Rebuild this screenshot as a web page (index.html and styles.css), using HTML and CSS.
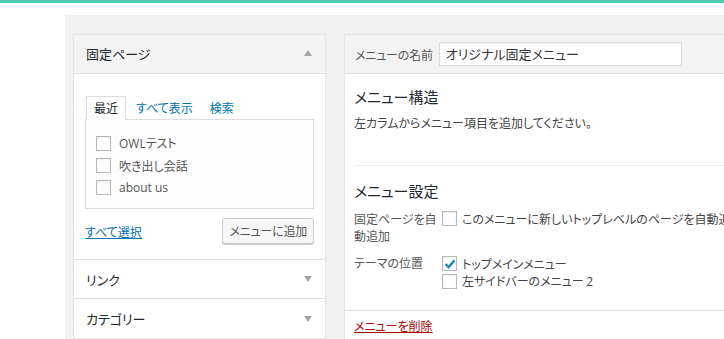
FILE: index.html
```html
<!DOCTYPE html>
<html lang="ja">
<head>
<meta charset="utf-8">
<link rel="stylesheet" href="styles.css">
</head>
<body>
<div class="topbar"></div>
<div class="page">
  <div class="wrap">
    <div class="left">
      <div class="acc">
        <div class="acc-head open">
          <span>固定ページ</span>
          <span class="arrow up"></span>
        </div>
        <div class="acc-body">
          <ul class="tabs">
            <li class="tab active">最近</li>
            <li class="tab"><a>すべて表示</a></li>
            <li class="tab"><a>検索</a></li>
          </ul>
          <div class="tab-panel">
            <label class="row"><span class="cb"></span><span class="lat">OWLテスト</span></label>
            <label class="row"><span class="cb"></span><span>吹き出し会話</span></label>
            <label class="row"><span class="cb"></span><span class="lat">about us</span></label>
          </div>
          <div class="actions">
            <a class="select-all">すべて選択</a>
            <span class="button">メニューに追加</span>
          </div>
        </div>
        <div class="acc-head closed">
          <span>リンク</span>
          <span class="arrow down"></span>
        </div>
        <div class="acc-head closed last">
          <span>カテゴリー</span>
          <span class="arrow down"></span>
        </div>
      </div>
    </div>
    <div class="right">
      <div class="menu-box">
        <div class="menu-head">
          <span class="name-label">メニューの名前</span>
          <span class="name-input">オリジナル固定メニュー</span>
        </div>
        <div class="menu-body">
          <h3 class="h3">メニュー構造</h3>
          <p class="desc">左カラムからメニュー項目を追加してください。</p>
          <div class="settings">
            <h3 class="h3">メニュー設定</h3>
            <div class="set-row first">
              <div class="set-label">固定ページを自動追加</div>
              <div class="set-opts">
                <label class="opt"><span class="cb"></span><span class="nowrap">このメニューに新しいトップレベルのページを自動追加</span></label>
              </div>
            </div>
            <div class="set-row second">
              <div class="set-label">テーマの位置</div>
              <div class="set-opts">
                <label class="opt"><span class="cb checked"><svg viewBox="0 0 14 14" width="14" height="14"><path d="M2.6 7.2 L5.6 10.2 L11.4 3.4" fill="none" stroke="#1e8cbe" stroke-width="2.4"/></svg></span><span>トップメインメニュー</span></label>
                <label class="opt"><span class="cb"></span><span>左サイドバーのメニュー <span class="lat">2</span></span></label>
              </div>
            </div>
          </div>
        </div>
        <div class="menu-foot">
          <a class="delete">メニューを削除</a>
        </div>
      </div>
    </div>
  </div>
</div>
</body>
</html>
```
FILE: styles.css
```css
* { box-sizing: border-box; }
html, body { margin: 0; padding: 0; height: 100%; overflow: hidden; background: #fff; }
body {
  font-family: "Noto Sans CJK JP", sans-serif;
  font-feature-settings: "palt";
  font-size: 12px;
  color: #444;
}
.lat { font-family: "Open Sans", "Noto Sans CJK JP", sans-serif; }
.topbar { height: 3px; background: #4ecab5; }
.page { padding: 12px 0 0 65px; height: calc(100% - 3px); }
.wrap {
  background: #f1f1f1;
  height: 100%;
  display: flex;
  gap: 18px;
  padding: 19px 0 0 8px;
  align-items: flex-start;
}
.left { width: 253px; flex: none; }
.right { flex: 1; min-width: 0; overflow: hidden; }

.acc {
  background: #fff;
  border: 1px solid #e5e5e5;
  box-shadow: 0 1px 1px rgba(0,0,0,.04);
}
.acc-head {
  height: 39px;
  display: flex;
  align-items: center;
  justify-content: space-between;
  padding: 0 12px 0 12px;
  font-size: 13px;
  color: #23282d;
  border-bottom: 1px solid #e1e1e1;
  background: #fff;
}
.acc-head.open { background: #f3f3f3; height: 39px; padding-bottom: 2px; }
.acc-head.last { border-bottom: none; }
.arrow { width: 0; height: 0; border-left: 4px solid transparent; border-right: 4px solid transparent; margin-right: 1px; }
.arrow.up { border-bottom: 6px solid #a0a5aa; }
.arrow.down { border-top: 6px solid #a0a5aa; }

.acc-body { padding: 21px 11px 15px 11px; border-bottom: 1px solid #e1e1e1; }
.tabs { list-style: none; margin: 0; padding: 0; display: flex; align-items: flex-end; height: 24px; }
.tab { padding: 0 7px; line-height: 22px; font-size: 12px; color: #0073aa; margin-right: 3px; }
.tab a { color: #0073aa; }
.tab.active {
  color: #23282d;
  border: 1px solid #ddd;
  border-bottom: none;
  background: #fdfdfd;
  height: 24px;
  position: relative;
  top: 1px;
  margin-left: 1px;
}
.tab-panel {
  border: 1px solid #ddd;
  background: #fdfdfd;
  height: 90px;
  padding: 12px 10px 0 10px;
}
.row { display: flex; align-items: center; height: 22px; font-size: 12px; color: #555; }
.row .cb { margin-right: 8px; }
.cb {
  display: inline-block;
  width: 15px; height: 15px;
  border: 1px solid #b4b9be;
  background: #fff;
  box-shadow: inset 0 1px 2px rgba(0,0,0,.07);
  flex: none;
  position: relative;
}
.cb svg { position: absolute; left: 0; top: 0; }
.actions { display: flex; justify-content: space-between; align-items: center; margin-top: 9px; }
.select-all { color: #0073aa; text-decoration: underline; font-size: 12px; }
.button {
  display: inline-block;
  height: 26px;
  line-height: 24px;
  padding: 0 6px;
  border: 1px solid #ccc;
  border-radius: 3px;
  background: #f7f7f7;
  box-shadow: 0 1px 0 #ccc;
  color: #555;
  font-size: 12px;
  letter-spacing: -0.2px;
}

.menu-box {
  background: #fff;
  border: 1px solid #e5e5e5;
  border-right: none;
  box-shadow: 0 1px 1px rgba(0,0,0,.04);
}
.menu-head {
  height: 39px;
  background: #f3f3f3;
  border-bottom: 1px solid #e1e1e1;
  display: flex;
  align-items: center;
  padding-left: 10px;
}
.name-label { font-size: 12px; color: #555; margin-right: 6px; letter-spacing: -0.2px; }
.name-input {
  width: 243px; height: 24px;
  border: 1px solid #ddd;
  background: #fff;
  box-shadow: inset 0 1px 2px rgba(0,0,0,.07);
  font-size: 13px;
  color: #333;
  line-height: 22px;
  padding: 0 6px;
}
.menu-body { padding: 13px 0 0 9px; }
.h3 { margin: 0; font-weight: normal; font-size: 15px; color: #23282d; line-height: 20px; }
.desc { margin: 7px 0 0; font-size: 12px; color: #444; line-height: 18px; }
.settings { margin-top: 33px; border-top: 1px solid #eee; padding-top: 15px; padding-bottom: 20px; }
.set-row { display: flex; margin-top: 9px; }
.set-row.second { margin-top: 10px; }
.set-label { width: 88px; flex: none; font-size: 12px; color: #555; line-height: 17px; }
.set-opts { display: flex; flex-direction: column; min-width: 0; }
.opt { display: flex; align-items: center; height: 18px; font-size: 12px; color: #444; white-space: nowrap; }
.set-row.first .opt { height: 17px; }
.opt .cb { margin-right: 5px; }
.nowrap { white-space: nowrap; }
.menu-foot { border-top: 1px solid #ddd; padding: 6px 0 0 9px; height: 40px; background: #fff; }
.delete { color: #a00; text-decoration: underline; font-size: 12px; }
```
